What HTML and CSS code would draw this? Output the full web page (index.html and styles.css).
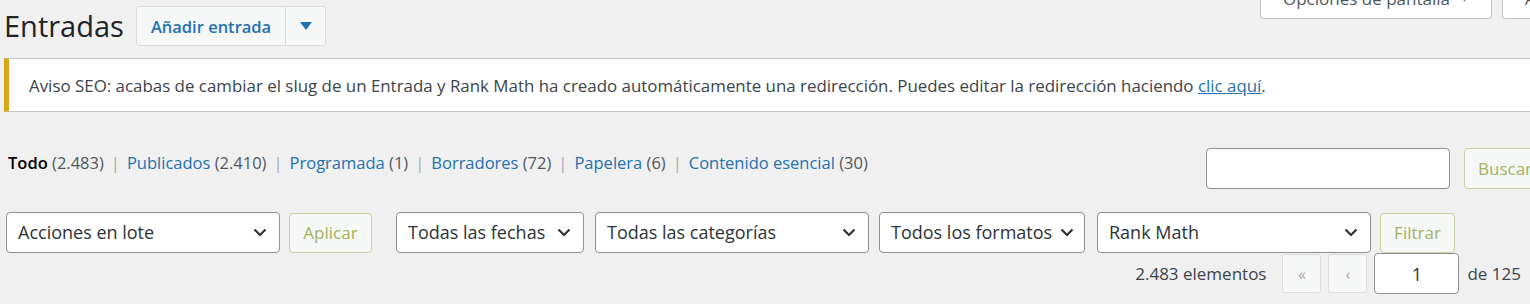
FILE: index.html
```html
<!DOCTYPE html>
<html lang="es">
<head>
<meta charset="utf-8">
<title>Entradas</title>
<link rel="stylesheet" href="styles.css">
</head>
<body>
<div class="wrap">
  <div class="header">
    <div class="title-group">
      <h1 class="page-title">Entradas</h1>
      <div class="split-btn">
        <span class="split-main">Añadir entrada</span>
        <span class="split-toggle"><svg width="12" height="8" viewBox="0 0 12 8"><path d="M0 0h12L6 8z" fill="#2271b1"/></svg></span>
      </div>
    </div>
    <div class="meta-links">
      <span class="meta-tab tab-options">Opciones de pantalla <span class="tab-arrow">▾</span></span>
      <span class="meta-tab tab-help">Ayuda <span class="tab-arrow">▾</span></span>
    </div>
  </div>

  <div class="notice">
    <p>Aviso SEO: acabas de cambiar el slug de un Entrada y Rank Math ha creado automáticamente una redirección. Puedes editar la redirección haciendo <a href="#" class="notice-link">clic aquí</a>.</p>
  </div>

  <div class="filters-row">
    <ul class="subsubsub">
      <li><span class="current">Todo</span> <span class="count">(2.483)</span></li>
      <li class="sep">|</li>
      <li><a href="#">Publicados</a> <span class="count">(2.410)</span></li>
      <li class="sep">|</li>
      <li><a href="#">Programada</a> <span class="count">(1)</span></li>
      <li class="sep">|</li>
      <li><a href="#">Borradores</a> <span class="count">(72)</span></li>
      <li class="sep">|</li>
      <li><a href="#">Papelera</a> <span class="count">(6)</span></li>
      <li class="sep">|</li>
      <li><a href="#">Contenido esencial</a> <span class="count">(30)</span></li>
    </ul>
    <div class="search-box">
      <span class="search-input"></span>
      <span class="btn btn-olive btn-search">Buscar entradas</span>
    </div>
  </div>

  <div class="tablenav">
    <div class="select sel-bulk"><span>Acciones en lote</span><svg class="chev" width="14" height="9" viewBox="0 0 14 9"><path d="M1.5 1.5L7 7l5.5-5.5" fill="none" stroke="#2c3338" stroke-width="2.2"/></svg></div>
    <span class="btn btn-olive btn-apply">Aplicar</span>
    <div class="select sel-dates"><span>Todas las fechas</span><svg class="chev" width="14" height="9" viewBox="0 0 14 9"><path d="M1.5 1.5L7 7l5.5-5.5" fill="none" stroke="#2c3338" stroke-width="2.2"/></svg></div>
    <div class="select sel-cats"><span>Todas las categorías</span><svg class="chev" width="14" height="9" viewBox="0 0 14 9"><path d="M1.5 1.5L7 7l5.5-5.5" fill="none" stroke="#2c3338" stroke-width="2.2"/></svg></div>
    <div class="select sel-formats"><span>Todos los formatos</span><svg class="chev" width="14" height="9" viewBox="0 0 14 9"><path d="M1.5 1.5L7 7l5.5-5.5" fill="none" stroke="#2c3338" stroke-width="2.2"/></svg></div>
    <div class="select sel-rank"><span>Rank Math</span><svg class="chev" width="14" height="9" viewBox="0 0 14 9"><path d="M1.5 1.5L7 7l5.5-5.5" fill="none" stroke="#2c3338" stroke-width="2.2"/></svg></div>
    <span class="btn btn-olive btn-filter">Filtrar</span>
  </div>

  <div class="pagination">
    <span class="displaying-num">2.483 elementos</span>
    <span class="page-btn">«</span>
    <span class="page-btn">‹</span>
    <span class="page-input">1</span>
    <span class="total-pages">de 125</span>
  </div>
</div>
</body>
</html>
```

FILE: styles.css
```css
html, body {
  margin: 0;
  padding: 0;
  overflow: hidden;
  background: #f0f0f1;
}
body {
  font-family: "Open Sans", "Noto Sans", sans-serif;
  font-size: 17px;
  color: #3c434a;
}
.wrap {
  width: 1560px;
  display: flex;
  flex-direction: column;
}
.header {
  display: flex;
  justify-content: space-between;
  align-items: flex-start;
  height: 58px;
}
.title-group {
  display: flex;
  align-items: center;
  padding-left: 4px;
  padding-top: 6px;
  gap: 12px;
}
.page-title {
  margin: 0;
  font-size: 29px;
  font-weight: 400;
  color: #1d2327;
  line-height: 40px;
}
.split-btn {
  display: flex;
  height: 40px;
  border: 1px solid #dcdcde;
  border-radius: 3px;
  background: #f6f7f7;
  box-sizing: border-box;
}
.split-main {
  display: flex;
  align-items: center;
  padding: 0 14px;
  color: #2271b1;
  font-weight: 600;
  font-size: 16.5px;
  border-right: 1px solid #dcdcde;
}
.split-toggle {
  display: flex;
  align-items: center;
  justify-content: center;
  width: 39px;
}
.meta-links {
  display: flex;
  gap: 10px;
  margin-top: -22px;
  margin-right: -32px;
}
.meta-tab {
  display: flex;
  align-items: center;
  height: 41px;
  box-sizing: border-box;
  padding: 0 22px;
  background: #fff;
  border: 1px solid #c3c4c7;
  border-top: none;
  border-radius: 0 0 4px 4px;
  color: #50575e;
  font-size: 17px;
  white-space: nowrap;
}
.tab-options { width: 232px; }
.tab-help { width: 90px; }
.tab-arrow { font-size: 10px; margin-left: 12px; color: #787c82; }

.notice {
  margin-left: 4px;
  height: 54px;
  box-sizing: border-box;
  background: #fff;
  border: 1px solid #c3c4c7;
  border-left: 5px solid #dba617;
  display: flex;
  align-items: center;
  padding-left: 20px;
}
.notice p {
  margin: 0;
  font-size: 16.9px;
  color: #3c434a;
  white-space: nowrap;
}
.notice-link { color: #2271b1; text-decoration: underline; }

.filters-row {
  display: flex;
  justify-content: space-between;
  align-items: flex-start;
  margin-top: 36px;
  height: 42px;
}
.subsubsub {
  list-style: none;
  margin: 0;
  padding: 2px 0 0 8px;
  display: flex;
  gap: 7px;
  font-size: 16.5px;
  line-height: 26px;
}
.subsubsub a { color: #2271b1; text-decoration: none; }
.subsubsub .current { color: #000; font-weight: 600; }
.subsubsub .count { color: #50575e; }
.subsubsub .sep { color: #a7aaad; }

.search-box {
  display: flex;
  gap: 14px;
  margin-right: -14px;
}
.search-input {
  width: 244px;
  height: 41px;
  box-sizing: border-box;
  border: 1px solid #8c8f94;
  border-radius: 4px;
  background: #fff;
}
.btn {
  display: inline-flex;
  align-items: center;
  justify-content: center;
  box-sizing: border-box;
  background: #f6f7f7;
  border-radius: 4px;
  font-size: 17px;
  white-space: nowrap;
  overflow: hidden;
}
.btn-olive {
  border: 1px solid #c9d29f;
  color: #a3b35e;
}
.btn-search {
  height: 41px;
  width: 110px;
  justify-content: flex-start;
  padding-left: 13px;
}

.tablenav {
  display: flex;
  align-items: center;
  margin-top: 22px;
  padding-left: 6px;
  height: 41px;
}
.select {
  height: 41px;
  box-sizing: border-box;
  background: #fff;
  border: 1px solid #8c8f94;
  border-radius: 4px;
  display: flex;
  align-items: center;
  justify-content: space-between;
  padding: 0 12px 1px 11px;
  color: #2c3338;
  font-size: 18px;
  white-space: nowrap;
}
.chev { flex: none; }
.sel-bulk { width: 274px; }
.sel-dates { width: 188px; margin-left: 24px; }
.sel-cats { width: 274px; margin-left: 11px; }
.sel-formats { width: 206px; margin-left: 10px; padding-right: 10px; }
.sel-rank { width: 274px; margin-left: 12px; }
.btn-apply { width: 83px; height: 40px; margin-left: 9px; }
.btn-filter { width: 75px; height: 40px; margin-left: 9px; }

.pagination {
  display: flex;
  align-items: center;
  justify-content: flex-end;
  padding-right: 39px;
  height: 41px;
  margin-top: 0;
}
.displaying-num { color: #3c434a; margin-right: 16px; }
.page-btn {
  width: 39px;
  height: 39px;
  box-sizing: border-box;
  display: inline-flex;
  align-items: center;
  justify-content: center;
  border: 1px solid #dcdcde;
  background: #f6f7f7;
  border-radius: 3px;
  color: #a7aaad;
  margin-right: 7px;
  font-size: 16px;
}
.page-input {
  width: 85px;
  height: 41px;
  box-sizing: border-box;
  border: 1px solid #8c8f94;
  border-radius: 4px;
  background: #fff;
  display: inline-flex;
  align-items: center;
  justify-content: center;
  color: #2c3338;
  font-size: 18px;
}
.total-pages { margin-left: 8px; color: #3c434a; }
```
